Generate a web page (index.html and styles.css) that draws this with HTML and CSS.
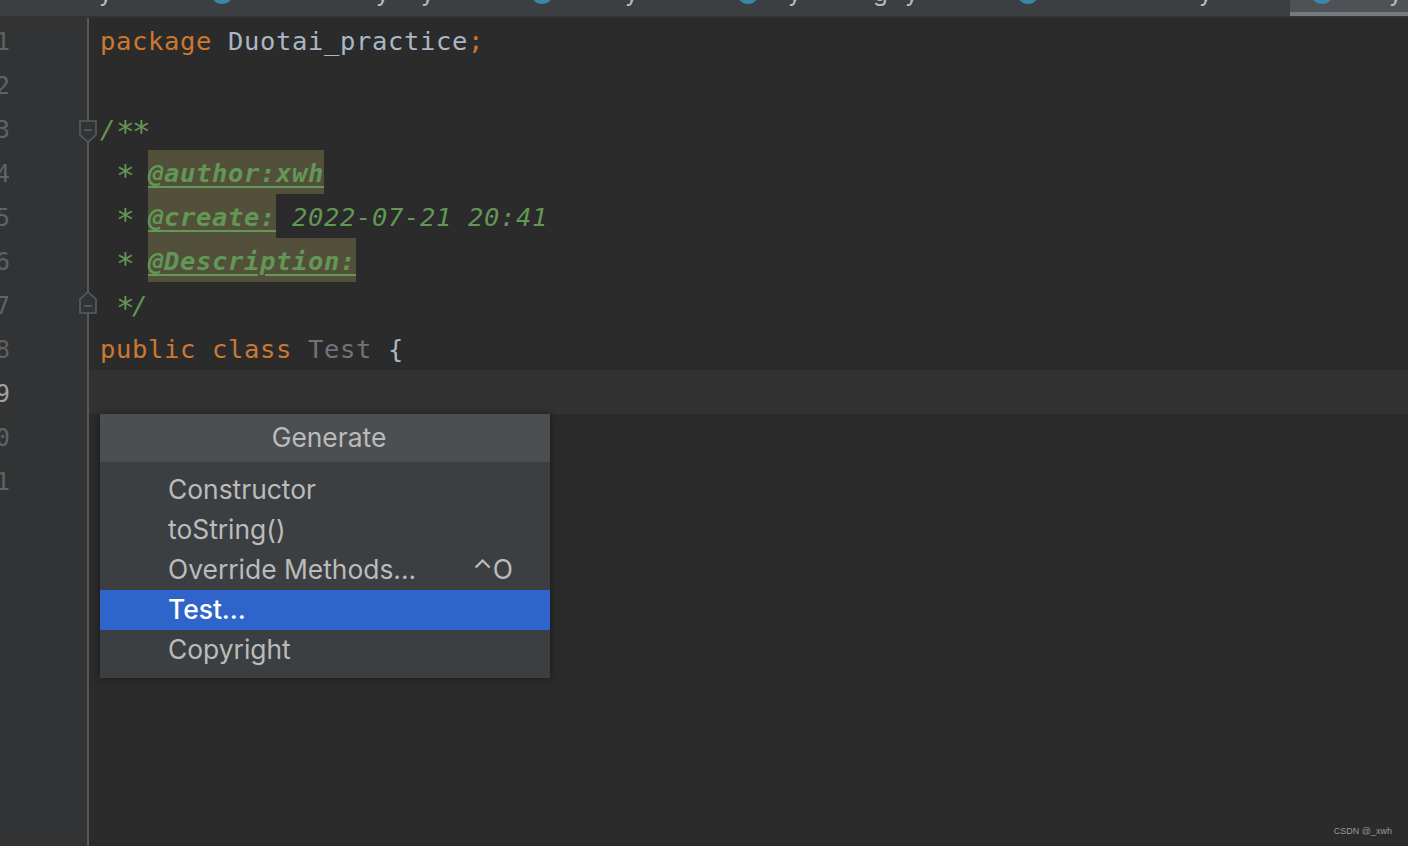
FILE: index.html
```html
<!DOCTYPE html>
<html lang="en">
<head>
<meta charset="utf-8">
<title>Generate</title>
<link rel="stylesheet" href="styles.css">
</head>
<body>
<div class="ide">
  <div class="tabs">
    <span class="tail tail-a">y</span>
    <span class="dot dot-a"></span>
    <span class="tail tail-b">y</span>
    <span class="tail tail-c">y</span>
    <span class="dot dot-b"></span>
    <span class="tail tail-d">y</span>
    <span class="dot dot-c"></span>
    <span class="tail tail-e">y</span>
    <span class="tail tail-f">g</span>
    <span class="tail tail-g">y</span>
    <span class="dot dot-d"></span>
    <span class="tail tail-h">y</span>
    <div class="tab-active">
      <span class="dot dot-e"></span>
      <span class="tail tail-i">y</span>
    </div>
  </div>
  <div class="editor">
    <div class="gutter">
      <div class="num"><span>1</span></div>
      <div class="num"><span>2</span></div>
      <div class="num"><span>3</span>
        <svg class="fold" width="20" height="24" viewBox="0 0 20 24"><path d="M2 2H18V16L10 23L2 16Z" fill="#313335" stroke="#5a5d5f" stroke-width="1.6"/><path d="M6 11H14" stroke="#5a5d5f" stroke-width="1.6"/></svg>
      </div>
      <div class="num"><span>4</span></div>
      <div class="num"><span>5</span></div>
      <div class="num"><span>6</span></div>
      <div class="num"><span>7</span>
        <svg class="fold fold-end" width="20" height="24" viewBox="0 0 20 24"><path d="M2 23H18V9L10 2L2 9Z" fill="#313335" stroke="#5a5d5f" stroke-width="1.6"/><path d="M6 16H14" stroke="#5a5d5f" stroke-width="1.6"/></svg>
      </div>
      <div class="num"><span>8</span></div>
      <div class="num current"><span>9</span></div>
      <div class="num"><span>10</span></div>
      <div class="num"><span>11</span></div>
    </div>
    <div class="code">
      <div class="line"><span class="kw">package</span> Duotai_practice<span class="semi">;</span></div>
      <div class="line"></div>
      <div class="line doc">/<span class="star">*</span><span class="star">*</span></div>
      <div class="line doc"> <span class="star">*</span> <span class="tag match">@author:xwh</span></div>
      <div class="line doc"> <span class="star">*</span> <span class="tag match">@create:</span> 2022-07-21 20:41</div>
      <div class="line doc"> <span class="star">*</span> <span class="tag match">@Description:</span></div>
      <div class="line doc"> <span class="star">*</span>/</div>
      <div class="line"><span class="kw">public class</span> <span class="unused">Test</span> {</div>
      <div class="line caret"></div>
      <div class="line"></div>
      <div class="line"></div>
    </div>
    <div class="popup">
      <div class="popup-title">Generate</div>
      <ul class="popup-list">
        <li class="item">Constructor</li>
        <li class="item">toString()</li>
        <li class="item"><span>Override Methods...</span><span class="key">⌃O</span></li>
        <li class="item selected">Test...</li>
        <li class="item">Copyright</li>
      </ul>
    </div>
  </div>
  <div class="mark">CSDN @_xwh</div>
</div>
</body>
</html>
```
FILE: styles.css
```css
* { box-sizing: border-box; }
html, body { margin: 0; height: 100%; overflow: hidden; background: #2b2b2b; }
.ide { position: relative; display: flex; flex-direction: column; width: 1408px; height: 846px; }

.tabs { position: relative; display: flex; flex: none; height: 18px; background: #3c3f41; border-bottom: 2px solid #323232; overflow: hidden; }
.dot { flex: none; width: 22px; height: 22px; margin-top: -18px; border-radius: 50%; background: #3b87a8; }
.tail { flex: none; width: 12px; height: 16px; font: 24px/16px "Inter", sans-serif; color: #bbbbbb; transform: translateY(-15px); }
.tail-a { margin-left: 99px; }
.dot-a { margin-left: 100px; }
.tail-b { margin-left: 143px; }
.tail-c { margin-left: 33px; }
.dot-b { margin-left: 98px; }
.tail-d { margin-left: 72px; }
.dot-c { margin-left: 100px; }
.tail-e { margin-left: 29px; }
.tail-f { margin-left: 73px; }
.tail-g { margin-left: 20px; }
.dot-d { margin-left: 100px; }
.tail-h { margin-left: 160px; }
.tab-active { position: absolute; top: 0; right: 0; display: flex; width: 118px; height: 18px; background: #4e5254; border-bottom: 6px solid #747a80; }
.dot-e { margin-left: 21px; }
.tail-i { margin-left: 56px; }

.editor { position: relative; display: flex; flex: 1; min-height: 0; }
.gutter { flex: none; width: 89px; background: #313335; border-right: 2px solid #555759; }
.num { position: relative; display: flex; justify-content: flex-end; width: 10px; height: 44px; font: 24px/48px "DejaVu Sans Mono", monospace; color: #606366; }
.num span { flex: none; }
.num.current { color: #a4a3a3; }
.fold { position: absolute; left: 78px; top: 13px; }
.fold-end { top: 8px; }

.code { flex: 1; min-width: 0; }
.line { height: 44px; padding-left: 11px; font: 25.5px/46px "DejaVu Sans Mono", monospace; letter-spacing: 0.65px; color: #a9b7c6; white-space: pre; }
.kw { color: #cc7832; }
.semi { color: #cc7832; }
.unused { color: #72737a; }
.doc { color: #629755; font-style: italic; }
.star { display: inline-block; width: 16px; font-size: 31px; line-height: 20px; letter-spacing: 0; vertical-align: -4px; }
.tag { font-weight: bold; text-decoration: underline; text-underline-offset: 4px; text-decoration-thickness: 2px; }
.match { display: inline-block; height: 44px; background: #52503a; }
.caret { background: #323232; }

.popup { position: absolute; left: 100px; top: 396px; width: 450px; background: #3c3f41; box-shadow: 0 0 8px rgba(0, 0, 0, 0.45); font-family: "Inter", "Noto Sans", "DejaVu Sans", sans-serif; color: #bbbbbb; }
.popup-title { height: 48px; padding-left: 8px; background: #4b4f52; font-size: 26.4px; line-height: 46px; text-align: center; }
.popup-list { margin: 0; padding: 7px 0 9px; list-style: none; }
.item { display: flex; justify-content: space-between; height: 40px; padding: 0 37px 0 68px; font-size: 26.4px; line-height: 40px; }
.selected { margin: 1px 0 -1px; background: #2f65ca; color: #ffffff; font-weight: 500; line-height: 38px; }

.mark { position: absolute; right: 16px; bottom: 9px; font: 9px/12px "Liberation Sans", sans-serif; color: #9a9a9a; }
```
